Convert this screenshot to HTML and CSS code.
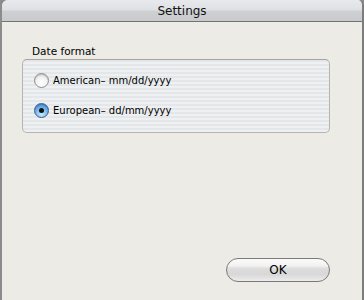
FILE: index.html
```html
<!DOCTYPE html>
<html lang="en">
<head>
    <meta charset="UTF-8">
    <title>Settings</title>
    <link rel="stylesheet" href="styles.css">
</head>
<body>
    <div class="window">
        <div class="titlebar">Settings</div>

        <div class="content">
            <div class="group-label">Date format</div>
            <div class="group">
                <label class="radio-row">
                    <span class="radio"></span>
                    <span>American– mm/dd/yyyy</span>
                </label>
                <label class="radio-row">
                    <span class="radio checked"></span>
                    <span>European– dd/mm/yyyy</span>
                </label>
            </div>

            <div class="buttons">
                <button class="ok-button">OK</button>
            </div>
        </div>
    </div>
</body>
</html>
```

FILE: styles.css
```css
body {
    margin: 0;
    width: 364px;
    height: 300px;
    overflow: hidden;
    background: #8c8c8c;
    font-family: "DejaVu Sans", "Liberation Sans", sans-serif;
    font-size: 10px;
    color: #000;
}
.window {
    margin-left: 2px;
    width: 360px;
    height: 300px;
    background: #ecebe5;
    border-right: 2px solid #7d7d7d;
    border-top-left-radius: 6px;
    border-top-right-radius: 6px;
    display: flex;
    flex-direction: column;
    overflow: hidden;
}
.titlebar {
    height: 21px;
    line-height: 22px;
    text-align: center;
    font-size: 12px;
    color: #111;
    background: linear-gradient(#e8e9ec 0%, #dfe1e5 45%, #cfd0d3 55%, #c9cacc 100%);
    border-bottom: 1px solid #737373;
}
.content {
    flex: 1;
    display: flex;
    flex-direction: column;
    padding: 22px 32px 0 20px;
}
.group-label {
    padding-left: 10px;
    height: 14px;
    line-height: 14px;
    font-size: 10.5px;
}
.group {
    box-sizing: border-box;
    margin-top: 1px;
    height: 74px;
    border: 1px solid #b4b4b0;
    border-top-color: #a8a49a;
    border-radius: 5px;
    background: repeating-linear-gradient(#e3e7ea 0px, #e3e7ea 2px, #eef0f1 2px, #eef0f1 4px);
    display: flex;
    flex-direction: column;
    padding: 12px 0 0 11px;
    gap: 14px;
}
.radio-row {
    display: flex;
    align-items: center;
    gap: 4px;
    height: 16px;
}
.radio {
    width: 13px;
    height: 13px;
    border-radius: 50%;
    border: 1px solid #8e8e8e;
    background: radial-gradient(circle at 50% 70%, #ffffff 0%, #f2f2f2 50%, #cfcfcf 100%);
    box-shadow: inset 0 1px 1px rgba(0, 0, 0, 0.15);
    display: flex;
    align-items: center;
    justify-content: center;
}
.radio.checked {
    border-color: #3c5b8a;
    background: radial-gradient(circle at 50% 80%, #c6ecff 0%, #7cbcf0 45%, #3a7fd0 100%);
}
.radio.checked::after {
    content: "";
    width: 5px;
    height: 5px;
    border-radius: 50%;
    background: #111;
}
.buttons {
    margin-top: auto;
    margin-bottom: 18px;
    display: flex;
    justify-content: flex-end;
}
.ok-button {
    width: 104px;
    height: 24px;
    border: 1px solid #7a7a7a;
    border-radius: 12px;
    background: linear-gradient(#fbfbfb 0%, #f2f2f2 30%, #dcdcdc 45%, #d8d8d8 70%, #ececec 100%);
    font-family: "DejaVu Sans", "Liberation Sans", sans-serif;
    font-size: 12px;
    color: #000;
    padding: 0;
}
```
